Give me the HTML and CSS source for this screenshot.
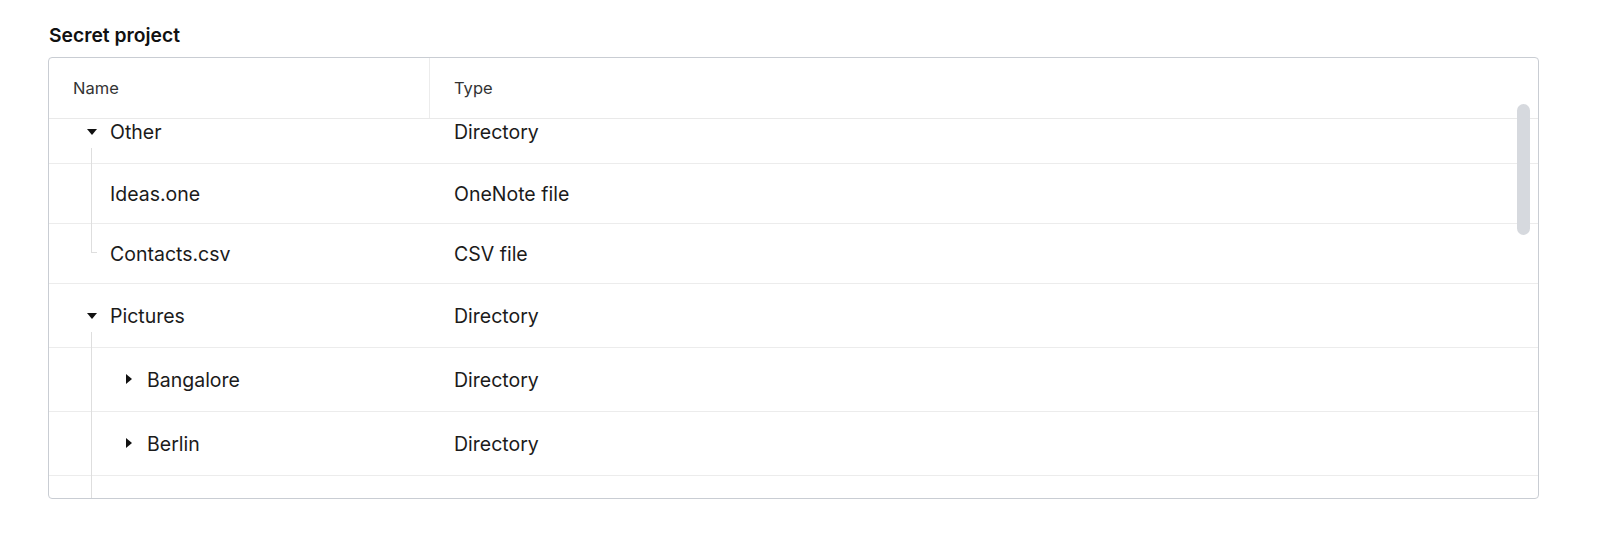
FILE: index.html
```html
<!DOCTYPE html>
<html>
<head>
<meta charset="utf-8">
<link rel="stylesheet" href="styles.css">
</head>
<body>
<div class="page">
  <h2 class="title">Secret project</h2>
  <div class="grid">
    <div class="head">
      <div class="hcell hname">Name</div>
      <div class="hcell htype">Type</div>
    </div>
    <div class="body">
      <div class="rows">
        <div class="row dir open">
          <div class="cell name"><span class="caret down"></span>Other</div>
          <div class="cell type">Directory</div>
        </div>
        <div class="row leaf kid">
          <div class="cell name"><span class="indent"></span>Ideas.one</div>
          <div class="cell type">OneNote file</div>
        </div>
        <div class="row leaf kid last">
          <div class="cell name"><span class="indent"></span>Contacts.csv</div>
          <div class="cell type">CSV file</div>
        </div>
        <div class="row dir open">
          <div class="cell name"><span class="caret down"></span>Pictures</div>
          <div class="cell type">Directory</div>
        </div>
        <div class="row dir kid">
          <div class="cell name"><span class="indent"></span><span class="caret right"></span>Bangalore</div>
          <div class="cell type">Directory</div>
        </div>
        <div class="row dir kid">
          <div class="cell name"><span class="indent"></span><span class="caret right"></span>Berlin</div>
          <div class="cell type">Directory</div>
        </div>
        <div class="row dir kid">
          <div class="cell name"></div>
          <div class="cell type"></div>
        </div>
      </div>
    </div>
    <div class="thumb"></div>
  </div>
</div>
</body>
</html>
```

FILE: styles.css
```css
* { box-sizing: border-box; }
html, body { margin: 0; padding: 0; background: #ffffff; }
body { font-family: "Inter", "Liberation Sans", sans-serif; color: #1b1b1b; }

.page { padding: 23px 0 0 48px; }

.title {
  margin: 0 0 10px 1px;
  font-size: 19.3px;
  font-weight: 600;
  line-height: 24px;
  color: #111;
}

.grid {
  position: relative;
  width: 1491px;
  height: 442px;
  border: 1px solid #c9cdd3;
  border-radius: 4px;
  overflow: hidden;
  display: flex;
  flex-direction: column;
}

.head {
  display: flex;
  height: 61px;
  border-bottom: 1px solid #e9e9e9;
  flex: none;
}
.hcell {
  display: flex;
  align-items: center;
  padding-left: 24px;
  font-size: 16.5px;
  color: #333;
}
.hname { width: 381px; border-right: 1px solid #ececec; }
.htype { flex: 1; }

.body { flex: 1; overflow: hidden; }
.rows { margin-top: -19px; }

.row {
  display: flex;
  border-bottom: 1px solid #ececec;
  position: relative;
}
.row.dir { height: 64px; }
.row.leaf { height: 60px; }

.cell {
  display: flex;
  align-items: center;
  font-size: 19.5px;
  color: #1b1b1b;
}
.cell.name { width: 381px; padding-left: 24px; }
.cell.type { flex: 1; padding-left: 24px; }

.indent { width: 37px; flex: none; }
.caret {
  width: 37px;
  height: 10px;
  flex: none;
  position: relative;
}
.caret::before {
  content: "";
  position: absolute;
  width: 0; height: 0;
}
.caret.down::before {
  left: 13.5px; top: 2px;
  border-left: 5.5px solid transparent;
  border-right: 5.5px solid transparent;
  border-top: 6px solid #111;
}
.caret.right::before {
  left: 16px; top: -0.5px;
  border-top: 5px solid transparent;
  border-bottom: 5px solid transparent;
  border-left: 6px solid #111;
}

/* tree guide lines */
.row.open::after,
.row.kid::after {
  content: "";
  position: absolute;
  left: 42px;
  width: 0;
  border-left: 1px solid #dedede;
}
.row.open::after { top: 48px; bottom: -1px; }
.row.kid::after { top: 0; bottom: -1px; }
.row.kid.last::after {
  bottom: auto;
  height: 28px;
  width: 5px;
  border-bottom: 1px solid #dedede;
}

.thumb {
  position: absolute;
  right: 8px;
  top: 46px;
  width: 13px;
  height: 131px;
  border-radius: 7px;
  background: #d6d9de;
}
```
